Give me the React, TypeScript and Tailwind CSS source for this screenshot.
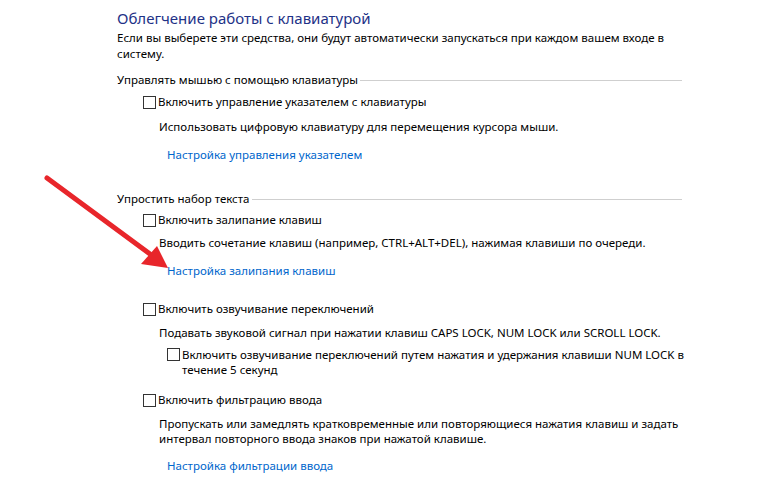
const Checkbox = () => (
  <span className="inline-block w-[13px] h-[13px] border border-[#333] bg-white shrink-0 mr-[2px]" />
);

const Link = ({ children, className = '' }: { children: string; className?: string }) => (
  <a href="#" className={`text-[#0066cc] hover:underline ${className}`}>
    {children}
  </a>
);

const SectionHeader = ({ title, className = '' }: { title: string; className?: string }) => (
  <div className={`flex items-center h-4 w-[565px] ${className}`}>
    <span className="whitespace-nowrap">{title}</span>
    <span className="flex-1 h-px bg-[#cfcfcf] ml-[2px]" />
  </div>
);

const CheckRow = ({ label, className = '' }: { label: string; className?: string }) => (
  <label className={`flex items-center h-4 ml-[26px] ${className}`}>
    <Checkbox />
    <span>{label}</span>
  </label>
);

export default function App() {
  return (
    <div className="relative w-[783px] h-[493px] bg-white overflow-hidden text-[11.5px] leading-4 text-black" style={{ fontFamily: '"Noto Sans", "Open Sans", sans-serif' }}>
      <div className="flex flex-col pl-[117px] pt-2">
        <h1 className="text-[15px] leading-5 text-[#1e3287] font-normal">Облегчение работы с клавиатурой</h1>
        <p className="mt-[2px]">
          Если вы выберете эти средства, они будут автоматически запускаться при каждом вашем входе в
          <br />
          систему.
        </p>

        <SectionHeader title="Управлять мышью с помощью клавиатуры" className="mt-[10px]" />
        <CheckRow label="Включить управление указателем с клавиатуры" className="mt-[6px]" />
        <p className="ml-[42px] mt-[9px]">Использовать цифровую клавиатуру для перемещения курсора мыши.</p>
        <Link className="ml-[50px] mt-3 self-start">Настройка управления указателем</Link>

        <SectionHeader title="Упростить набор текста" className="mt-7" />
        <CheckRow label="Включить залипание клавиш" className="mt-[5px]" />
        <p className="ml-[42px] mt-[7px]">Вводить сочетание клавиш (например, CTRL+ALT+DEL), нажимая клавиши по очереди.</p>
        <Link className="ml-[50px] mt-3 self-start">Настройка залипания клавиш</Link>

        <CheckRow label="Включить озвучивание переключений" className="mt-[22px]" />
        <p className="ml-[42px] mt-2">Подавать звуковой сигнал при нажатии клавиш CAPS LOCK, NUM LOCK или SCROLL LOCK.</p>
        <label className="flex items-start ml-[50px] mt-[6px] leading-[15px]">
          <span className="mt-px flex"><Checkbox /></span>
          <span>
            Включить озвучивание переключений путем нажатия и удержания клавиши NUM LOCK в
            <br />
            течение 5 секунд
          </span>
        </label>

        <CheckRow label="Включить фильтрацию ввода" className="mt-[15px]" />
        <p className="ml-[42px] mt-2 leading-[15px]">
          Пропускать или замедлять кратковременные или повторяющиеся нажатия клавиш и задать
          <br />
          интервал повторного ввода знаков при нажатой клавише.
        </p>
        <Link className="ml-[50px] mt-3 self-start">Настройка фильтрации ввода</Link>
      </div>

      <svg className="absolute left-0 top-0 pointer-events-none" width="783" height="493">
        <line x1="47" y1="178" x2="150" y2="254" stroke="#e8262b" strokeWidth="5" strokeLinecap="round" />
        <polygon points="168,268 141,264 157,246" fill="#e8262b" />
      </svg>
    </div>
  );
}
